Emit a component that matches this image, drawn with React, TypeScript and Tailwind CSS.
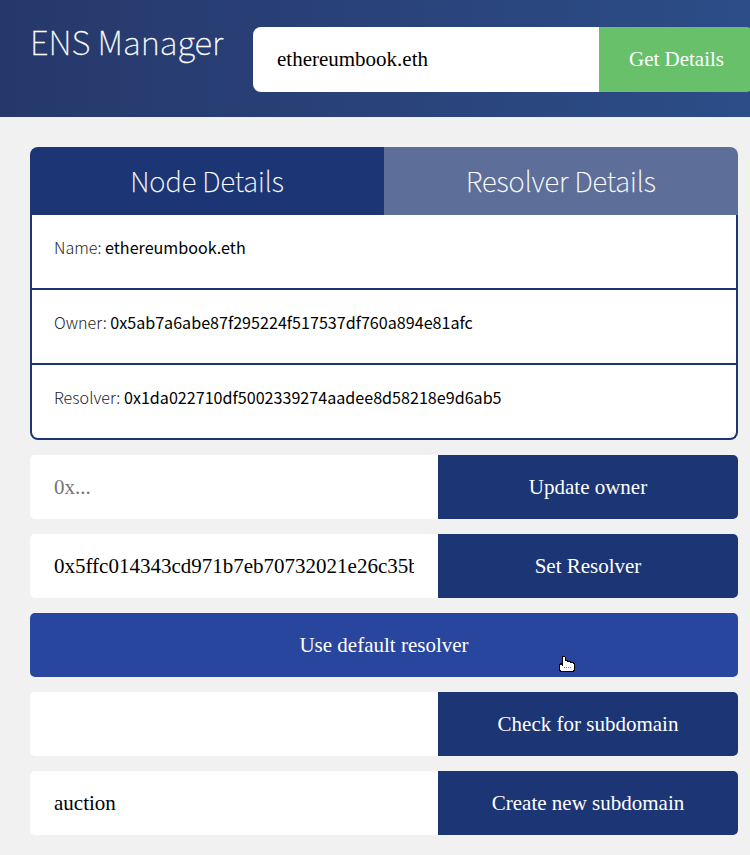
import type { ReactNode } from "react";

const sans = "font-['Noto_Sans_CJK_SC',sans-serif]";
const serif = "font-['Liberation_Serif',serif]";

function Detail({ label, value }: { label: string; value: string }) {
  return (
    <div className="h-[75px] border-b-2 border-[#1c3575] px-[22px] pt-5 text-[16.13px] leading-6 whitespace-nowrap text-black last:h-[73px] last:border-b-0">
      <span className="font-light text-[#222]">{label}: </span>
      <span>{value}</span>
    </div>
  );
}

function Field({ value, placeholder, action }: { value?: string; placeholder?: string; action: string }) {
  return (
    <div className="flex h-16 overflow-hidden rounded-[5px]">
      <input
        className="w-[408px] bg-white px-6 pt-0.5 text-[21px] text-black placeholder:text-[#757575] focus:outline-none"
        defaultValue={value}
        placeholder={placeholder}
      />
      <button className="flex-1 bg-[#1c3575] pt-0.5 text-[21px] text-white">{action}</button>
    </div>
  );
}

function Tab({ className, children }: { className: string; children: ReactNode }) {
  return <button className={`w-1/2 ${className}`}>{children}</button>;
}

function Hand() {
  return (
    <svg className="absolute top-[43px] left-[529px] size-4" viewBox="0 0 16 16" shapeRendering="crispEdges">
      <path fill="#000" d="M3 0h3v1h1v3h2v1h3v1h3v1h1v8h-1v1H1v-1H0V8h1V7h2z" />
      <path fill="#fff" d="M4 1h2v4h2v1h3v1h3v1h1v6h-1v1H2v-1H1V9h2v1h1z" />
      <path fill="#777" d="M5 11h1v1H5zM7 11h1v1H7zM9 11h1v1H9zM11 11h1v1h-1z" />
    </svg>
  );
}

export default function App() {
  return (
    <div className={`h-[855px] w-[750px] overflow-hidden bg-[#f1f1f1] ${serif}`}>
      <header className="flex h-[117px] bg-linear-to-r from-[#26386b] to-[#2c4d88] pt-[27px] pl-[30px]">
        <h1 className={`w-[223px] shrink-0 text-[33px] leading-7 font-thin whitespace-nowrap text-white [-webkit-text-stroke:0.3px_white] ${sans}`}>
          ENS Manager
        </h1>
        <div className="flex h-[65px] w-[501px] shrink-0 overflow-hidden rounded-lg">
          <input className="w-[346px] bg-white px-6 text-[21px] text-black focus:outline-none" defaultValue="ethereumbook.eth" />
          <button className="w-[155px] bg-[#69c06b] text-[21px] text-white">Get Details</button>
        </div>
      </header>
      <main className="flex flex-col gap-[15px] pt-[30px] pr-3 pl-[30px]">
        <section className={sans}>
          <div className="flex h-[68px] overflow-hidden rounded-t-lg text-[27.5px] font-thin text-white [-webkit-text-stroke:0.25px_white]">
            <Tab className="bg-[#1c3575]">Node Details</Tab>
            <Tab className="bg-[#5d6f99]">Resolver Details</Tab>
          </div>
          <div className="rounded-b-lg border-x-2 border-b-2 border-[#1c3575] bg-white">
            <Detail label="Name" value="ethereumbook.eth" />
            <Detail label="Owner" value="0x5ab7a6abe87f295224f517537df760a894e81afc" />
            <Detail label="Resolver" value="0x1da022710df5002339274aadee8d58218e9d6ab5" />
          </div>
        </section>
        <Field placeholder="0x..." action="Update owner" />
        <Field value="0x5ffc014343cd971b7eb70732021e26c35b744cc4" action="Set Resolver" />
        <div className="relative">
          <button className="block h-16 w-full rounded-[5px] bg-[#28469d] pt-0.5 text-[21px] text-white">
            Use default resolver
          </button>
          <Hand />
        </div>
        <Field action="Check for subdomain" />
        <Field value="auction" action="Create new subdomain" />
      </main>
    </div>
  );
}
